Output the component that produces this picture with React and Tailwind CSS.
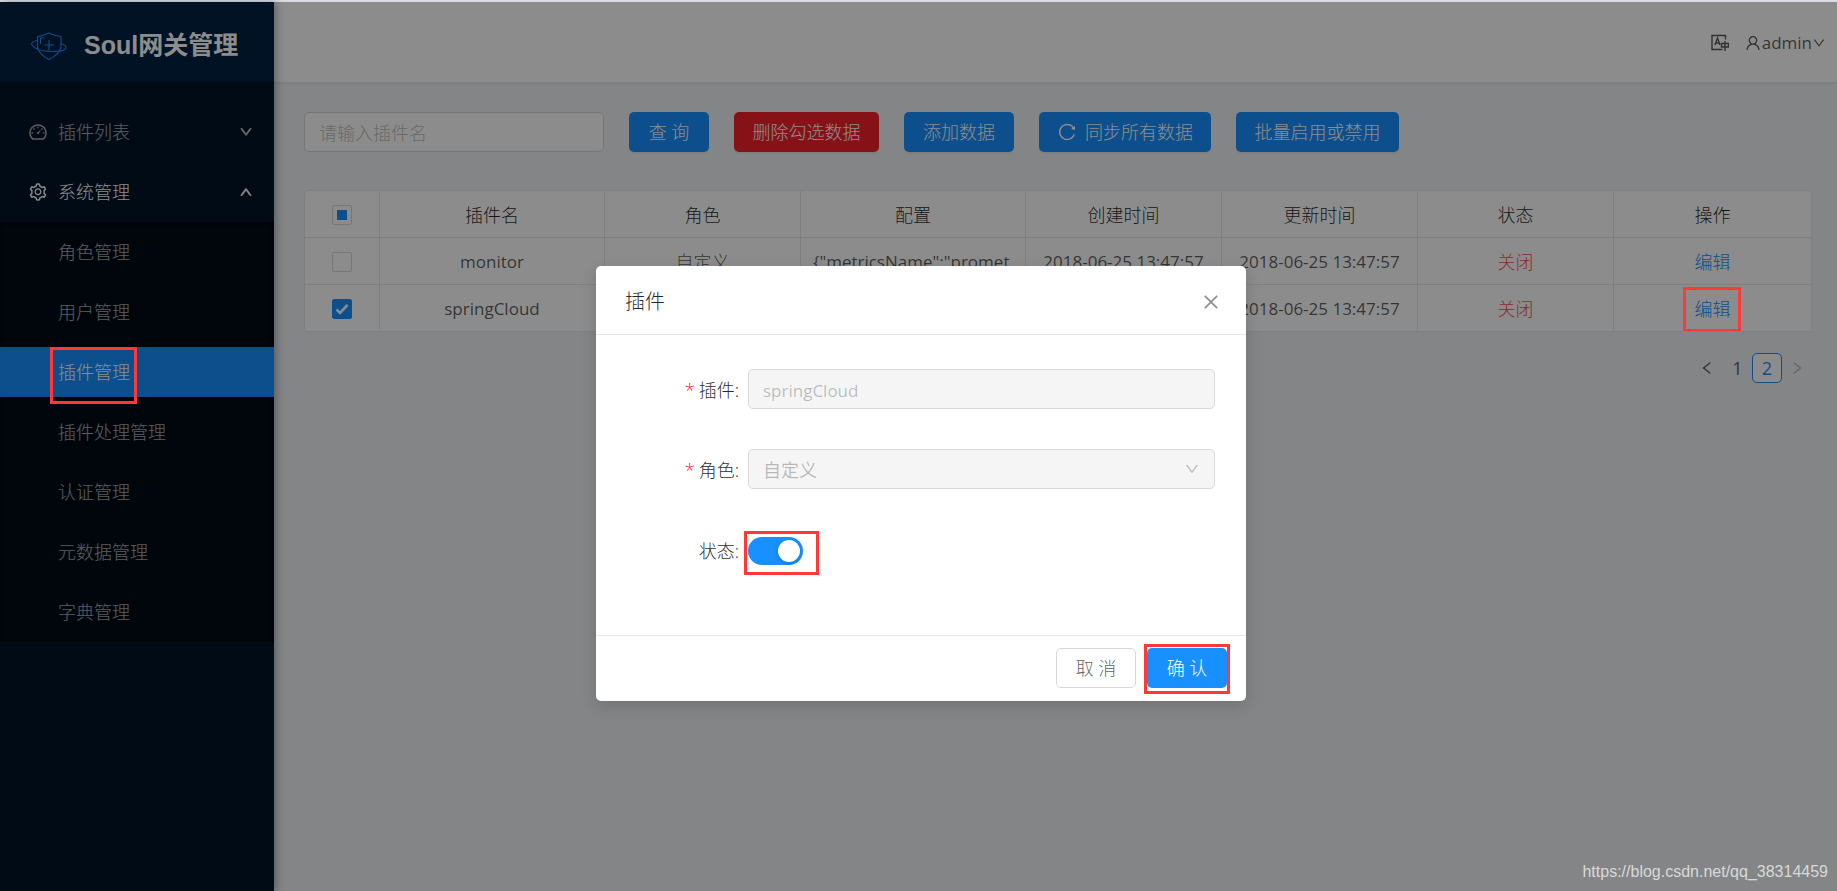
import React, { useState } from 'react';
import {
  AiOutlineClose,
  AiOutlineDashboard,
  AiOutlineDown,
  AiOutlineLeft,
  AiOutlineReload,
  AiOutlineRight,
  AiOutlineSetting,
  AiOutlineUp,
  AiOutlineUser,
} from 'react-icons/ai';

const systemMenu = [
  '角色管理',
  '用户管理',
  '插件管理',
  '插件处理管理',
  '认证管理',
  '元数据管理',
  '字典管理',
];

const plugins = [
  { name: 'monitor', role: '自定义', config: '{"metricsName":"promet', time: '2018-06-25 13:47:57' },
  { name: 'springCloud', role: '自定义', config: '', time: '2018-06-25 13:47:57' },
];

function Logo() {
  return (
    <svg className="w-9 h-7 shrink-0" viewBox="0 0 36 28" fill="none" stroke="#1890ff" strokeWidth="1.1">
      <path d="M6.500 4.500C10 4 14 3 18 1c4 2 8 3 12 3.500V14c0 5-6 11-12 13.500C12 25 6.500 19 6.500 14z" />
      <path d="M9.500 12V6h4M18 8v10M13.500 13h9.500" />
      <path d="M6 8.500C2 9 0 11 1 13c3 4.500 12 6.500 20 6.500 8 0 14-1 14-4 0-1.500-2-3-5-4" />
    </svg>
  );
}

function LangIcon() {
  return (
    <svg className="w-[18px] h-[18px]" viewBox="0 0 18 18" fill="none" stroke="currentColor" strokeWidth="1.4">
      <path d="M14.500 5.500V1.500H1v14h10.500" />
      <path d="M4 11l2.500-7L9 11M5 9h3" />
      <path d="M10.500 9.500h7v3.500h-7zM14 7v10" />
    </svg>
  );
}

// red frame drawn round the control that matters in this step
function Mark({ className }) {
  return <span className={`absolute z-20 border-3 border-[#ff3838] pointer-events-none ${className}`} />;
}

function Sidebar() {
  return (
    <aside className="relative w-[274px] shrink-0 bg-[#001529] shadow-[2px_0_8px_rgba(0,21,41,0.35)]">
      <div className="flex items-center h-20 pt-2 pl-[31px] gap-[17px] bg-[#002140]">
        <Logo />
        <h1 className="font-['Liberation_Sans','Noto_Sans_CJK_SC',sans-serif] text-[25px] font-bold text-white whitespace-nowrap">
          Soul网关管理
        </h1>
      </div>
      <nav className="pt-5 text-lg text-white/65">
        <button className="flex items-center w-full h-[60px] pl-7 pr-[21px]">
          <AiOutlineDashboard className="w-5 h-5" />
          <span className="ml-2.5">插件列表</span>
          <AiOutlineDown className="w-3.5 h-3.5 ml-auto stroke-[60]" />
        </button>
        <button className="flex items-center w-full h-[60px] pl-7 pr-[21px] text-white">
          <AiOutlineSetting className="w-5 h-5" />
          <span className="ml-2.5">系统管理</span>
          <AiOutlineUp className="w-3.5 h-3.5 ml-auto stroke-[60]" />
        </button>
        <ul className="bg-[#000c17] shadow-[inset_0_2px_8px_rgba(0,0,0,0.45)]">
          {systemMenu.map((item) => (
            <li key={item} className="py-[5px]">
              {item === '插件管理' ? (
                <a href="#plugin" className="relative flex items-center h-[50px] pl-[58px] bg-[#1890ff] text-white">
                  {item}
                  <Mark className="left-[50px] top-0 w-[87px] h-[57px]" />
                </a>
              ) : (
                <a href="#menu" className="flex items-center h-[50px] pl-[58px]">{item}</a>
              )}
            </li>
          ))}
        </ul>
      </nav>
    </aside>
  );
}

function ActionButton({ className, children }) {
  return (
    <button
      className={`flex items-center justify-center h-10 rounded-[5px] text-lg text-white whitespace-nowrap shadow-[0_2px_0_rgba(0,0,0,0.045)] ${className}`}
    >
      {children}
    </button>
  );
}

function Check({ label, checked, partial, onChange }) {
  return (
    <span className="relative flex w-5 h-5 mx-auto">
      <input
        type="checkbox"
        aria-label={label}
        checked={checked}
        onChange={onChange}
        className="appearance-none w-5 h-5 rounded-xs border border-[#d9d9d9] bg-white checked:bg-[#1890ff] checked:border-[#1890ff]"
      />
      {partial && <span className="absolute left-[5px] top-[5px] w-2.5 h-2.5 bg-[#1890ff] pointer-events-none" />}
      {checked && (
        <svg className="absolute inset-0 w-5 h-5 pointer-events-none" viewBox="0 0 20 20" fill="none" stroke="#fff" strokeWidth="2.6">
          <path d="M4.500 10.500l3.500 3.500 7.500-8" />
        </svg>
      )}
    </span>
  );
}

function PluginTable() {
  const [selected, setSelected] = useState(['springCloud']);

  const toggle = (name) => {
    setSelected(selected.includes(name) ? selected.filter((n) => n !== name) : [...selected, name]);
  };

  const cell = 'h-[47px] pt-0.5 border-b border-r border-[#e8e8e8] whitespace-nowrap overflow-hidden';

  return (
    <table className="w-full mt-[38px] table-fixed border-separate border-spacing-0 border-t border-l border-[#e8e8e8] rounded-[5px] bg-white text-[17px] text-center text-black/65">
      <colgroup>
        <col className="w-[75px]" />
        <col className="w-[225px]" />
        <col className="w-[196px]" />
        <col className="w-[225px]" />
        <col className="w-[196px]" />
        <col className="w-[196px]" />
        <col className="w-[196px]" />
        <col />
      </colgroup>
      <thead className="text-lg text-black/85">
        <tr>
          <th className={cell}>
            <Check
              label="全选"
              checked={selected.length === plugins.length}
              partial={selected.length === 1}
              onChange={() => setSelected(selected.length === plugins.length ? [] : plugins.map((p) => p.name))}
            />
          </th>
          {['插件名', '角色', '配置', '创建时间', '更新时间', '状态', '操作'].map((title) => (
            <th key={title} className={`${cell} font-light`}>{title}</th>
          ))}
        </tr>
      </thead>
      <tbody>
        {plugins.map((plugin) => (
          <tr key={plugin.name}>
            <td className={cell}>
              <Check
                label={plugin.name}
                checked={selected.includes(plugin.name)}
                onChange={() => toggle(plugin.name)}
              />
            </td>
            <td className={`${cell} font-normal`}>{plugin.name}</td>
            <td className={`${cell} text-lg`}>{plugin.role}</td>
            <td className={`${cell} pl-3 text-left font-normal`}>{plugin.config}</td>
            <td className={`${cell} font-normal`}>{plugin.time}</td>
            <td className={`${cell} font-normal`}>{plugin.time}</td>
            <td className={`${cell} text-lg text-[#ff4d4f]`}>关闭</td>
            <td className={`${cell} relative text-lg text-[#1890ff]`}>
              <button>编辑</button>
              {plugin.name === 'springCloud' && <Mark className="left-[69px] top-0.5 w-[58px] h-[45px]" />}
            </td>
          </tr>
        ))}
      </tbody>
    </table>
  );
}

function Pagination() {
  return (
    <div className="flex items-center justify-end gap-0.5 mt-[21px] pr-[3px] text-lg leading-none font-normal text-black/65">
      <button aria-label="上一页" className="flex items-center justify-center w-8 h-[30px]">
        <AiOutlineLeft className="w-4 h-4" />
      </button>
      <button className="w-[25px] h-[30px]">1</button>
      <button className="w-[30px] h-[30px] rounded-[5px] border border-[#1890ff] bg-white text-[#1890ff]">2</button>
      <button aria-label="下一页" disabled className="flex items-center justify-center w-[25px] h-[30px] text-black/25">
        <AiOutlineRight className="w-4 h-4" />
      </button>
    </div>
  );
}

function PluginModal() {
  const [enabled, setEnabled] = useState(true);

  return (
    <div role="dialog" aria-labelledby="modal-title" className="w-[650px] rounded-[5px] bg-white text-lg text-black/85 shadow-[0_5px_15px_rgba(0,0,0,0.15)]">
      <div className="flex items-center justify-between h-[69px] pt-1 pl-[29px] pr-[25px] border-b border-[#e8e8e8]">
        <h2 id="modal-title" className="text-xl">插件</h2>
        <button aria-label="关闭" className="text-black/45">
          <AiOutlineClose className="w-5 h-5" />
        </button>
      </div>

      <form className="flex flex-col gap-10 h-[300px] pt-[34px] pl-[30px] pr-[31px]">
        <div className="flex items-center h-10">
          <label htmlFor="plugin" className="w-[113px] mr-[9px] pt-0.5 text-right">
            <span className="mr-1 text-[#f5222d]">*</span>插件:
          </label>
          <input
            id="plugin"
            disabled
            defaultValue="springCloud"
            className="flex-1 h-10 pt-0.5 px-3.5 rounded-[5px] border border-[#d9d9d9] bg-[#f5f5f5] text-[17px] font-normal text-black/25"
          />
        </div>
        <div className="flex items-center h-10">
          <label htmlFor="role" className="w-[113px] mr-[9px] pt-0.5 text-right">
            <span className="mr-1 text-[#f5222d]">*</span>角色:
          </label>
          <div className="relative flex-1">
            <select
              id="role"
              disabled
              className="appearance-none w-full h-10 pt-0.5 px-3.5 rounded-[5px] border border-[#d9d9d9] bg-[#f5f5f5] font-normal text-black/25 opacity-100"
            >
              <option>自定义</option>
            </select>
            <AiOutlineDown className="absolute right-[15px] top-3 w-4 h-4 text-black/25" />
          </div>
        </div>
        <div className="flex items-center h-11">
          <label htmlFor="status" className="w-[113px] mr-[9px] text-right">状态:</label>
          <div className="relative flex">
            <input
              id="status"
              type="checkbox"
              role="switch"
              checked={enabled}
              onChange={(e) => setEnabled(e.target.checked)}
              className="peer appearance-none w-[55px] h-7 rounded-full bg-black/25 checked:bg-[#1890ff]"
            />
            <span className="absolute left-[3px] top-[3px] w-[22px] h-[22px] rounded-full bg-white shadow-[0_2px_4px_rgba(0,35,11,0.2)] pointer-events-none peer-checked:left-[30px]" />
            <Mark className="-left-1 -top-1.5 w-[75px] h-11" />
          </div>
        </div>
      </form>

      <div className="flex justify-end gap-[11px] pt-3 pb-[13px] pr-[19px] border-t border-[#e8e8e8]">
        <button className="w-20 h-10 rounded-[5px] border border-[#d9d9d9] bg-white text-black/65">取 消</button>
        <div className="relative">
          <button className="w-20 h-10 rounded-[5px] bg-[#1890ff] text-white">确 认</button>
          <Mark className="-left-[3px] -top-1 w-[86px] h-[50px]" />
        </div>
      </div>
    </div>
  );
}

export default function App() {
  return (
    <div className="flex flex-col min-h-screen font-['Open_Sans','Noto_Sans_CJK_SC',sans-serif] font-light">
      <div className="h-0.5 bg-[#dcdee3]" />
      <div className="relative flex flex-1 bg-[#f0f2f5]">
        <Sidebar />

        <div className="flex-1 min-w-0">
          <header className="flex items-center justify-end h-20 pt-0.5 pr-[11px] bg-white text-[17px] font-normal text-black/65 shadow-[0_1px_4px_rgba(0,21,41,0.08)]">
            <button aria-label="切换语言" className="mr-[15px]">
              <LangIcon />
            </button>
            <button className="flex items-center">
              <AiOutlineUser className="w-[18px] h-[18px]" />
              admin
              <AiOutlineDown className="w-3.5 h-3.5" />
            </button>
          </header>

          <main className="pt-[30px] pl-[30px] pr-[25px]">
            <div className="flex items-center gap-[25px]">
              <input
                aria-label="插件名"
                placeholder="请输入插件名"
                className="w-[300px] h-10 pt-0.5 px-3.5 rounded-[5px] border border-[#d9d9d9] bg-white text-lg placeholder:text-[#bfbfbf]"
              />
              <ActionButton className="w-20 bg-[#1890ff]">查 询</ActionButton>
              <ActionButton className="w-[145px] bg-[#f5222d]">删除勾选数据</ActionButton>
              <ActionButton className="w-[110px] bg-[#1890ff]">添加数据</ActionButton>
              <ActionButton className="w-[172px] gap-2 bg-[#1890ff]">
                <AiOutlineReload className="w-5 h-5" />
                同步所有数据
              </ActionButton>
              <ActionButton className="w-[163px] bg-[#1890ff]">批量启用或禁用</ActionButton>
            </div>
            <PluginTable />
            <Pagination />
          </main>
        </div>

        <div className="absolute inset-0 z-10 flex items-start justify-center pt-[264px] pl-[5px] bg-black/45">
          <PluginModal />
        </div>
        <p className="absolute right-[9px] bottom-[7px] z-20 font-['Liberation_Sans',sans-serif] font-normal text-base text-white/70">
          https://blog.csdn.net/qq_38314459
        </p>
      </div>
    </div>
  );
}
